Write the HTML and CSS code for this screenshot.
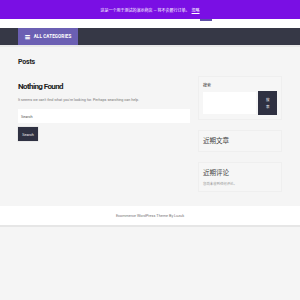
FILE: index.html
```html
<!DOCTYPE html>
<html lang="zh">
<head>
<meta charset="utf-8">
<link rel="stylesheet" href="styles.css">
</head>
<body>
<div class="notice">这是一个用于测试的演示商店 — 将不会履行订单。 <span class="dismiss">忽略</span></div>
<div class="topstrip"><span class="tab"></span></div>
<nav class="nav">
  <div class="cat-btn"><span class="burger">☰</span>ALL CATEGORIES</div>
</nav>
<div class="page-title">Posts</div>
<div class="content">
  <main class="main">
    <h1 class="nf-title">Nothing Found</h1>
    <p class="nf-text">It seems we can't find what you're looking for. Perhaps searching can help.</p>
    <div class="search-input">Search</div>
    <div class="search-btn">Search</div>
  </main>
  <aside class="sidebar">
    <div class="widget widget-search">
      <div class="w-label">搜索</div>
      <div class="w-row">
        <div class="w-input"></div>
        <div class="w-btn"><span>搜</span><span>索</span></div>
      </div>
    </div>
    <div class="widget widget-posts">
      <div class="w-title">近期文章</div>
    </div>
    <div class="widget widget-comments">
      <div class="w-title">近期评论</div>
      <div class="w-sub">您尚未收到任何评论。</div>
    </div>
  </aside>
</div>
<footer class="footer">Ecommerce WordPress Theme By Luzuk</footer>
</body>
</html>
```
FILE: styles.css
```css
html, body {
  margin: 0;
  padding: 0;
}
body {
  background: #f5f5f5;
  font-family: Roboto, "Noto Sans CJK SC", sans-serif;
  color: #333;
}
.notice {
  background: #7a0fe4;
  height: 19px;
  color: #fff;
  font-size: 4px;
  display: flex;
  align-items: center;
  justify-content: center;
}
.dismiss {
  margin-left: 2px;
  text-decoration: underline;
}
.topstrip {
  background: #fff;
  height: 9px;
  display: flex;
}
.tab {
  margin-left: 200px;
  width: 12px;
  height: 2px;
  background: #5d4fa6;
}
.nav {
  background: #363846;
  height: 17px;
  padding-left: 18px;
  display: flex;
  border-bottom: 2px solid #e9e9e9;
}
.cat-btn {
  background: #6b5fb3;
  width: 60px;
  color: #fff;
  font-weight: bold;
  font-size: 4.6px;
  letter-spacing: 0.1px;
  display: flex;
  align-items: center;
  justify-content: center;
}
.burger {
  margin-right: 4px;
  font-size: 5px;
}
.page-title {
  padding: 11px 18px 0;
  font-size: 7px;
  font-weight: bold;
  color: #222;
  height: 14px;
  letter-spacing: -0.2px;
}
.content {
  display: flex;
  padding: 4px 18px 0;
  gap: 8px;
  align-items: flex-start;
}
.main {
  width: 172px;
  padding-top: 6px;
}
.nf-title {
  margin: 0;
  font-size: 8px;
  font-weight: bold;
  color: #222;
  line-height: 10px;
  letter-spacing: -0.6px;
}
.nf-text {
  margin: 5px 0 0;
  font-size: 3.7px;
  color: #777;
  line-height: 6px;
}
.search-input {
  margin-top: 6px;
  height: 14px;
  background: #fff;
  font-size: 3.8px;
  color: #555;
  display: flex;
  align-items: center;
  padding-left: 3px;
}
.search-btn {
  margin-top: 4px;
  width: 20px;
  height: 14px;
  background: #2f3142;
  color: #eee;
  font-size: 3.8px;
  display: flex;
  align-items: center;
  justify-content: center;
  box-shadow: 0 0 0 0.5px #ddd;
}
.sidebar {
  width: 84px;
  display: flex;
  flex-direction: column;
  gap: 10px;
}
.widget {
  background: #f6f6f6;
  border: 1px solid #efefef;
  padding: 0 4px;
  box-sizing: border-box;
}
.widget-search {
  padding-top: 6px;
  height: 44px;
}
.widget-posts {
  height: 22px;
  display: flex;
  align-items: center;
}
.widget-comments {
  height: 30px;
  padding-top: 6px;
}
.w-label {
  font-size: 4px;
  color: #333;
  line-height: 5px;
}
.w-row {
  display: flex;
  gap: 2px;
  margin-top: 3px;
  align-items: center;
}
.w-input {
  width: 54px;
  height: 22px;
  background: #fff;
}
.w-btn {
  width: 19px;
  height: 24px;
  background: #2f3142;
  color: #fff;
  font-size: 3.5px;
  display: flex;
  flex-direction: column;
  align-items: center;
  justify-content: center;
  gap: 2px;
}
.w-title {
  font-size: 6.5px;
  color: #444;
  line-height: 8px;
}
.w-sub {
  margin-top: 4px;
  font-size: 3.4px;
  color: #999;
}
.footer {
  margin-top: 14px;
  background: #fff;
  height: 19px;
  border-bottom: 2px solid #e6e6e6;
  display: flex;
  align-items: center;
  justify-content: center;
  font-size: 3.8px;
  color: #777;
}
```
